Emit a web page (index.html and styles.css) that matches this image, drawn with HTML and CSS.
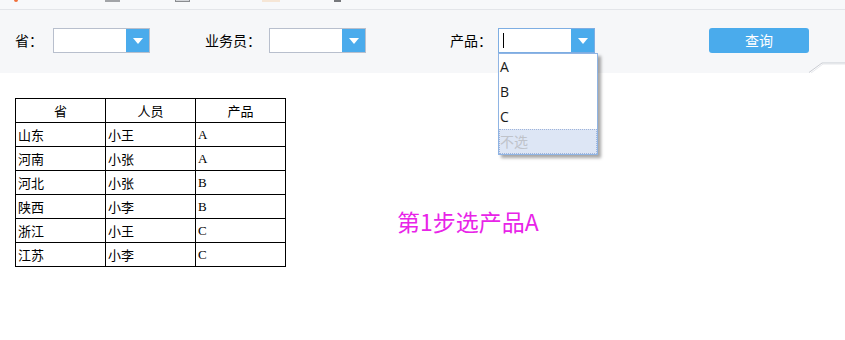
FILE: index.html
```html
<!DOCTYPE html>
<html lang="zh">
<head>
<meta charset="utf-8">
<title>查询</title>
<link rel="stylesheet" href="styles.css">
</head>
<body>
<div class="topstrip">
  <span class="ic ic-orange"></span>
  <span class="ic ic-grey1"></span>
  <span class="ic ic-box"></span>
  <span class="ic ic-beige"></span>
  <span class="ic ic-dark"></span>
</div>
<div class="toolbar">
  <div class="field f1">
    <span class="label w1">省：</span>
    <div class="combo">
      <div class="combo-input"></div>
      <div class="combo-btn"><span class="arrow"></span></div>
    </div>
  </div>
  <div class="field f2">
    <span class="label w2">业务员：</span>
    <div class="combo">
      <div class="combo-input"></div>
      <div class="combo-btn"><span class="arrow"></span></div>
    </div>
  </div>
  <div class="field f3">
    <span class="label w3">产品：</span>
    <div class="combo focused">
      <div class="combo-input"><span class="caret"></span></div>
      <div class="combo-btn"><span class="arrow"></span></div>
      <ul class="dropdown">
        <li class="opt">A</li>
        <li class="opt">B</li>
        <li class="opt">C</li>
        <li class="opt none">不选</li>
      </ul>
    </div>
  </div>
  <button class="query">查询</button>
  <svg class="tab" width="36" height="11" viewBox="0 0 36 11">
    <polygon points="0,11 13,1 36,1 36,11" fill="#ffffff"/>
    <polyline points="0,10.5 13,1 36,1" fill="none" stroke="#c9ccd2" stroke-width="1"/>
    <polyline points="2,11 14,2 36,2" fill="none" stroke="#e6e8ec" stroke-width="1"/>
  </svg>
</div>
<div class="content">
  <table class="data">
    <thead>
      <tr><th>省</th><th>人员</th><th>产品</th></tr>
    </thead>
    <tbody>
      <tr><td>山东</td><td>小王</td><td class="mono">A</td></tr>
      <tr><td>河南</td><td>小张</td><td class="mono">A</td></tr>
      <tr><td>河北</td><td>小张</td><td class="mono">B</td></tr>
      <tr><td>陕西</td><td>小李</td><td class="mono">B</td></tr>
      <tr><td>浙江</td><td>小王</td><td class="mono">C</td></tr>
      <tr><td>江苏</td><td>小李</td><td class="mono">C</td></tr>
    </tbody>
  </table>
  <div class="note">第1步选产品A</div>
</div>
</body>
</html>
```

FILE: styles.css
```css
* { box-sizing: border-box; }
html, body {
  margin: 0;
  padding: 0;
  background: #ffffff;
  font-family: "Noto Sans CJK SC", "Noto Sans", sans-serif;
  color: #000;
}
.topstrip {
  height: 10px;
  background: #f7f8fa;
  border-bottom: 1px solid #e3e5e9;
  display: flex;
  align-items: flex-start;
}
.ic { display: block; height: 2px; }
.ic-orange { width: 4px; margin-left: 14px; background: #f0703a; border-radius: 0 0 2px 2px; }
.ic-grey1 { width: 15px; margin-left: 87px; background: #a2a4a8; }
.ic-box { width: 15px; margin-left: 55px; height: 2px; border: 1px solid #8a8c90; border-top: 0; background: #d4d6da; }
.ic-beige { width: 18px; margin-left: 72px; background: #f6e6d6; }
.ic-dark { width: 7px; margin-left: 54px; background: #76787c; }

.toolbar {
  position: relative;
  height: 63px;
  background: #f6f7f9;
  display: flex;
  align-items: flex-start;
  padding-top: 18px;
  padding-left: 15px;
}
.field { display: flex; align-items: center; height: 25px; }
.f2 { margin-left: 55px; }
.f3 { margin-left: 84px; }
.label { font-size: 14px; line-height: 25px; white-space: nowrap; }
.w1 { width: 38px; }
.w2 { width: 64px; }
.w3 { width: 48px; }
.combo {
  position: relative;
  width: 97px;
  height: 25px;
  border: 1px solid #b8bfcd;
  display: flex;
  background: #fff;
}
.combo.focused { border-color: #7eaee3; }
.combo-input { flex: 1; position: relative; }
.caret {
  position: absolute;
  left: 4px;
  top: 4px;
  width: 1px;
  height: 15px;
  background: #000;
}
.combo-btn {
  width: 23px;
  background: #4aabec;
  display: flex;
  align-items: center;
  justify-content: center;
}
.arrow {
  width: 0;
  height: 0;
  border-left: 5px solid transparent;
  border-right: 5px solid transparent;
  border-top: 6px solid #ffffff;
  margin-top: 1px;
}
.dropdown {
  position: absolute;
  left: -1px;
  top: 24px;
  width: 100px;
  margin: 0;
  padding: 0;
  list-style: none;
  background: #fff;
  border: 1px solid #8fb4e4;
  box-shadow: 3px 3px 3px rgba(0, 0, 0, 0.35);
  z-index: 5;
}
.opt {
  height: 25px;
  line-height: 25px;
  padding-left: 1px;
  font-family: "Open Sans", "Noto Sans", sans-serif;
  font-size: 14px;
  color: #1a1a1a;
}
.opt.none {
  background: #dde6f5;
  outline: 1px dotted #9fb4da;
  outline-offset: -1px;
  color: #bfc3ca;
  font-family: "Noto Sans CJK SC", sans-serif;
  font-size: 14px;
}
.query {
  margin-left: 114px;
  width: 100px;
  height: 25px;
  border: 0;
  border-radius: 3px;
  background: #4aabec;
  color: #fff;
  font-family: "Noto Sans CJK SC", sans-serif;
  font-size: 14px;
  line-height: 25px;
  padding: 0;
}
.tab {
  position: absolute;
  right: 0;
  bottom: 0;
}

.content {
  display: flex;
  align-items: flex-start;
  padding-top: 25px;
  padding-left: 15px;
}
.data {
  border-collapse: collapse;
  font-size: 13px;
}
.data th, .data td {
  border: 1px solid #000;
  width: 90px;
  height: 24px;
  padding: 0 2px;
  font-weight: normal;
  line-height: 22px;
}
.data th { text-align: center; }
.data td { text-align: left; }
.data td.mono { font-family: "Liberation Serif", "DejaVu Serif", serif; font-size: 13px; }
.note {
  margin-left: 111px;
  margin-top: 111px;
  font-size: 23px;
  line-height: 24px;
  color: #e824e8;
}
```
